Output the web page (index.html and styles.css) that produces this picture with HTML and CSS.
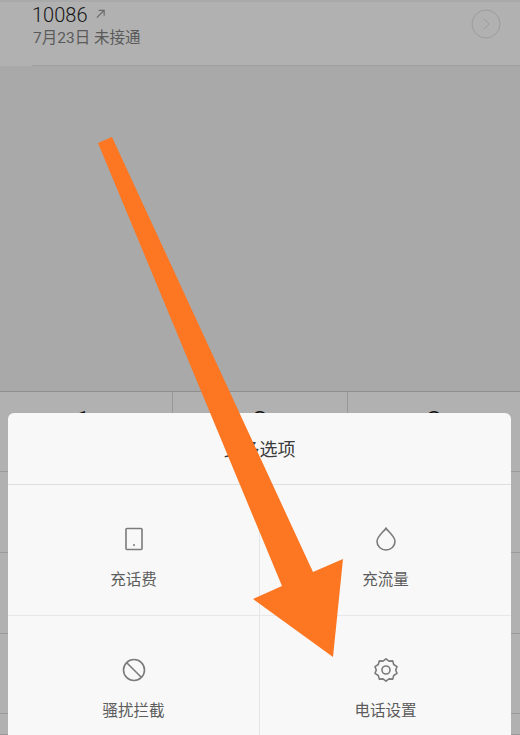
FILE: index.html
```html
<!DOCTYPE html>
<html lang="zh">
<head>
<meta charset="utf-8">
<title>更多选项</title>
<link rel="stylesheet" href="styles.css">
</head>
<body>
<div class="page">
  <header class="call-row">
    <div class="call-inner">
      <div class="call-text">
        <div class="number">10086
          <svg class="out-arrow" viewBox="0 0 12 12"><path d="M2 10.5 10 2.5M4 2.5h6v6" /></svg>
        </div>
        <div class="meta">7月23日 未接通</div>
      </div>
      <svg class="detail" viewBox="0 0 30 30"><circle cx="15" cy="15" r="14" /><path d="M12.5 9.5 18 15l-5.5 5.5" /></svg>
    </div>
  </header>
  <div class="gap"></div>
  <div class="keypad">
    <div class="key first"><span>1</span></div>
    <div class="key"><span>2</span></div>
    <div class="key"><span>3</span></div>
    <div class="key first"></div><div class="key"></div><div class="key"></div>
    <div class="key first"></div><div class="key"></div><div class="key"></div>
    <div class="key first"></div><div class="key"></div><div class="key"></div>
    <div class="key first"></div><div class="key"></div><div class="key"></div>
  </div>

  <section class="sheet">
    <h1 class="sheet-title">更多选项</h1>
    <div class="options">
      <div class="option">
        <svg class="icon" viewBox="0 0 24 24"><rect x="4" y="1.5" width="16" height="21" rx="1" /><circle class="dot" cx="12" cy="18" r="1" /></svg>
        <span>充话费</span>
      </div>
      <div class="option">
        <svg class="icon" viewBox="0 0 24 24"><path d="M12 1.2C9.5 5 3 9.300 3 14.500a9 8.500 0 0 0 18 0C21 9.300 14.500 5 12 1.200Z" /></svg>
        <span>充流量</span>
      </div>
      <div class="option">
        <svg class="icon" viewBox="0 0 24 24"><circle cx="12" cy="12" r="10.500" /><path d="M5 5l14 14" /></svg>
        <span>骚扰拦截</span>
      </div>
      <div class="option">
        <svg class="icon" viewBox="0 0 24 24"><path d="M12 .8 15 3.100 18.700 2.900 19.700 6.500 23 8.700 21.700 12 23 15.300 19.700 17.500 18.700 21.100 15 20.900 12 23.200 9 20.900 5.300 21.100 4.300 17.500 1 15.300 2.300 12 1 8.700 4.300 6.500 5.300 2.900 9 3.100Z" stroke-linejoin="round"/><circle cx="12" cy="12" r="4" /></svg>
        <span>电话设置</span>
      </div>
    </div>
  </section>

  <svg class="arrow" viewBox="0 0 520 735"><polygon points="98,143 112,137 313,572 343,559 333,657 253,599 282,586" /></svg>
</div>
</body>
</html>
```
FILE: styles.css
```css
* { box-sizing: border-box; }
html, body { margin: 0; padding: 0; }
body { font-family: Roboto, "Noto Sans CJK SC", sans-serif; }
.page {
  position: relative;
  width: 520px;
  height: 735px;
  overflow: hidden;
  background: #a9a9a9;
  display: flex;
  flex-direction: column;
}
.call-row {
  height: 66px;
  padding-left: 32px;
  background: #b1b1b1;
  border-top: 2px solid #a9a9a9;
}
.call-inner {
  height: 100%;
  padding: 1px 19px 0 0;
  border-bottom: 1px solid #9e9e9e;
  display: flex;
  justify-content: space-between;
  align-items: flex-start;
}
.number {
  font-size: 20px;
  line-height: 24px;
  color: #151515;
  font-weight: 300;
  display: flex;
  align-items: center;
  gap: 8px;
}
.out-arrow { width: 11px; height: 11px; margin-top: -3px; fill: none; stroke: #6b6b6b; stroke-width: 1.300; }
.meta {
  margin-top: 1px;
  padding-left: 1px;
  font-size: 15.500px;
  line-height: 20px;
  color: #5a5a5a;
}
.detail {
  width: 30px;
  height: 30px;
  margin-top: 6px;
  fill: none;
  stroke: #9c9c9c;
  stroke-width: 1;
}
.gap { height: 325px; }
.keypad {
  flex: 1;
  display: grid;
  grid-template-columns: 172px 175px 1fr;
  grid-template-rows: 80px 81px 81px 80px 1fr;
  background: #b1b1b1;
  border-top: 1px solid #8f8f8f;
}
.key {
  border-left: 1px solid #999;
  border-bottom: 1px solid #9a9a9a;
  text-align: center;
  font-size: 30px;
  font-weight: 300;
  line-height: 36px;
  padding-top: 12px;
  color: #111;
}
.key.first { border-left: 0; padding-right: 6px; }
.sheet {
  position: absolute;
  left: 8px;
  right: 9px;
  top: 413px;
  bottom: 0;
  background: #f8f8f8;
  border-radius: 6px 6px 0 0;
  display: flex;
  flex-direction: column;
}
.sheet-title {
  margin: 0;
  height: 72px;
  border-bottom: 1px solid #dfdfdf;
  text-align: center;
  font-size: 18px;
  font-weight: 400;
  line-height: 74px;
  color: #3c3c3c;
}
.options {
  flex: 1;
  display: grid;
  grid-template-columns: 252px 1fr;
  grid-template-rows: 131px 1fr;
}
.option {
  display: flex;
  flex-direction: column;
  align-items: center;
  padding-top: 42px;
  gap: 18px;
  font-size: 15.500px;
  line-height: 22px;
  color: #5c5c5c;
}
.option:nth-child(odd) { border-right: 1px solid #e3e5e8; }
.option:nth-child(-n+2) { border-bottom: 1px solid #e8e8e8; }
.icon {
  width: 24px;
  height: 24px;
  fill: none;
  stroke: #7b7b7b;
  stroke-width: 1.600;
}
.icon .dot { fill: #7b7b7b; stroke: none; }
.arrow {
  position: absolute;
  left: 0;
  top: 0;
  width: 520px;
  height: 735px;
  fill: #fd7622;
}
```
